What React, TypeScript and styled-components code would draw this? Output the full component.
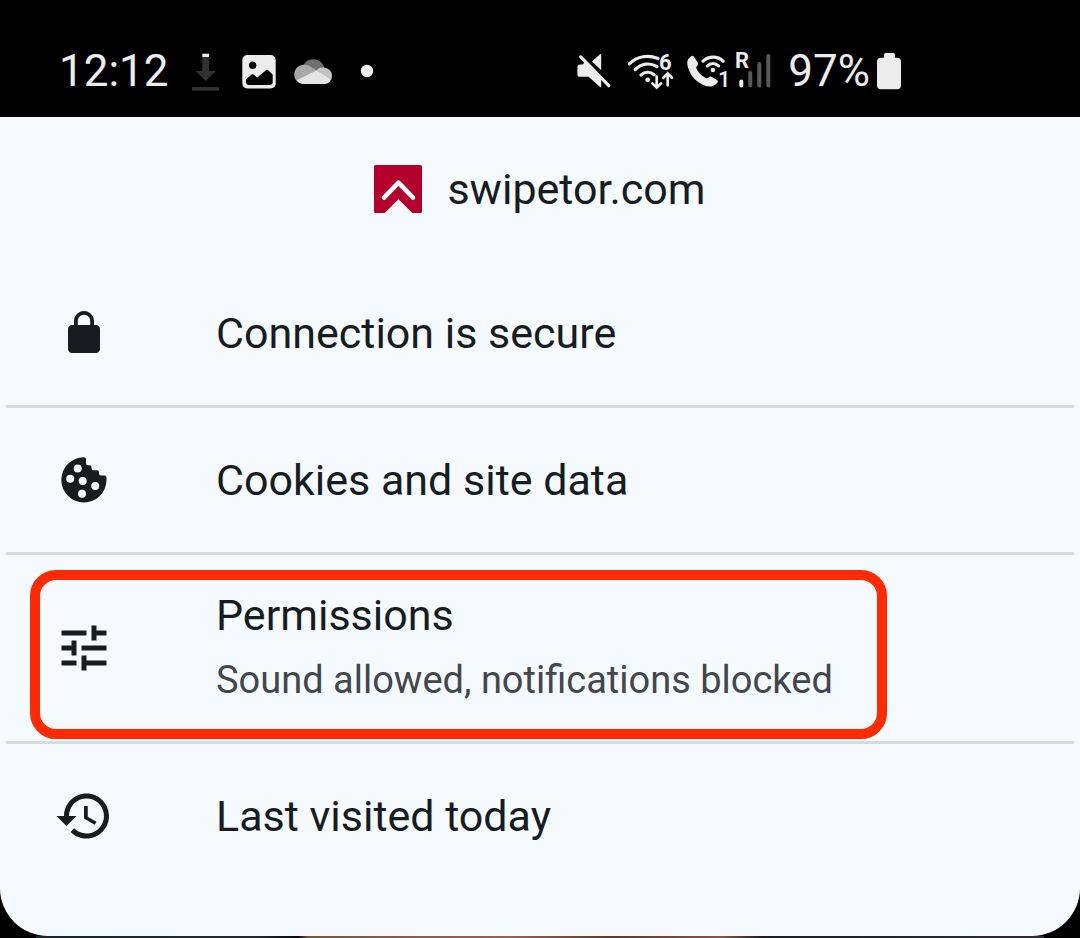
import React from "react";
import styled, { createGlobalStyle } from "styled-components";

const ink = "#171c1f";
const paper = "#f5faff";
const light = "#ececec";

const GlobalStyle = createGlobalStyle`
  *, *::before, *::after { box-sizing: border-box; }
  body {
    margin: 0;
    background: #000;
    font-family: Roboto, "Liberation Sans", sans-serif;
  }
`;

const StatusBar = styled.header`
  display: flex;
  align-items: center;
  justify-content: space-between;
  height: 117px;
  padding: 24px 177px 0 59px;
  background: #000;
  color: ${light};
`;

const StatusGroup = styled.div<{ $gap: number }>`
  display: flex;
  align-items: center;
  gap: ${(p) => p.$gap}px;
`;

const StatusText = styled.span`
  font-size: 44px;
  line-height: 48px;
  white-space: nowrap;
`;

const StatusIcon = styled.svg`
  display: block;
  flex: none;
  height: 40px;
  overflow: visible;
`;

const Sheet = styled.main`
  padding-bottom: 48px;
  border-radius: 0 0 48px 48px;
  background: ${paper};
  color: ${ink};
`;

const SiteHeader = styled.div`
  display: flex;
  align-items: center;
  justify-content: center;
  gap: 25px;
  height: 144px;
`;

const SiteLogo = styled.svg`
  display: block;
  width: 48px;
  height: 48px;
`;

const SiteName = styled.h1`
  margin: 0;
  font-size: 43px;
  font-weight: 400;
  line-height: 52px;
`;

const List = styled.ul`
  margin: 0;
  padding: 0 6px;
  list-style: none;
`;

const Item = styled.li`
  position: relative;
  & + & {
    border-top: 3px solid #d6dbe0;
  }
`;

const Row = styled.button`
  display: flex;
  align-items: center;
  gap: 102px;
  width: 100%;
  min-height: 144px;
  padding: 8px 48px;
  border: 0;
  background: transparent;
  color: inherit;
  font-family: inherit;
  text-align: left;
  cursor: pointer;
`;

const DetailRow = styled(Row)`
  min-height: 186px;
`;

const RowIcon = styled.svg`
  display: block;
  flex: none;
  width: 60px;
  height: 60px;
  fill: currentColor;
`;

const RowText = styled.span`
  display: flex;
  flex-direction: column;
`;

const RowTitle = styled.span`
  font-size: 43px;
  line-height: 64px;
`;

const RowDetail = styled.span`
  color: #42474b;
  font-size: 38px;
  line-height: 66px;
`;

const Highlight = styled.span`
  position: absolute;
  inset: 15px 187px 2px 24px;
  border: 10px solid #ff2a00;
  border-radius: 26px;
  pointer-events: none;
`;

const PagePeek = styled.div`
  height: 2px;
  margin: 0 36px;
  background: linear-gradient(
    90deg,
    #1c262c 0%,
    #222a2e 22%,
    #080808 26%,
    #7a5640 27%,
    #94664e 47%,
    #5e3a2a 57%,
    #85564a 68%,
    #1e1e22 72%,
    #2e2c30 100%
  );
`;

function DownloadIcon() {
  return (
    <StatusIcon width="32" viewBox="0 0 32 40" aria-hidden="true">
      <path d="M12.3 6H19v14h7L15.7 30 5.7 20h6.6z" fill="#303030" />
      <path d="M12.3 2.7H19V6h-6.7z" fill={light} />
      <path d="M2 36h27v3.7H2z" fill="#303030" />
    </StatusIcon>
  );
}

function PictureIcon() {
  return (
    <StatusIcon width="36" viewBox="0 0 36 40" aria-hidden="true">
      <rect x="2.3" y="4" width="33.4" height="33.4" rx="5" fill={light} />
      <circle cx="12.7" cy="14.3" r="3.7" />
      <path d="M6 28.6l5.4-5q1-.9 2 0l3.9 3 8.6-7.4q1.1-.9 2.2 0l4.6 4.3V31q0 3-3 3H9q-3 0-3-3z" />
    </StatusIcon>
  );
}

function CloudIcon() {
  return (
    <StatusIcon width="40" viewBox="0 0 40 40" aria-hidden="true">
      <circle cx="19.3" cy="19.4" r="11.2" fill="#707070" />
      <path d="M9.6 13.7c2.6-.2 5 .6 7 2l6 3.5L2.6 29.7C-2.6 23 1.6 14.2 9.6 13.7z" fill="#a8a8a8" />
      <path d="M22.6 19.2c2-2.6 5-3 7.4-2.6 7.5 1 9.7 8 7 12.4z" fill="#c2c2c2" />
      <path d="M22.6 19.2L37 28.5c-1 3-3.6 4.6-7 4.6H10c-3.4 0-6-1.4-7.5-3.8z" fill="#e4e4e4" />
    </StatusIcon>
  );
}

function DotIcon() {
  return (
    <StatusIcon width="30" viewBox="0 0 30 40" aria-hidden="true">
      <circle cx="15" cy="20" r="6.2" fill={light} />
    </StatusIcon>
  );
}

function MutedIcon() {
  return (
    <StatusIcon width="50" viewBox="0 0 50 40" aria-hidden="true" fill={light}>
      <path d="M20 10.4l8-7.2q1.2-.8 1.2.6v15.4z" />
      <path d="M13.4 10.8L29.2 27v8.4q0 1.4-1.2.5L16.6 25.8H8q-2.6 0-2.6-2.6v-6.8Q5.4 13.6 8 13.4h2.5z" />
      <path d="M8.7 5.9l28.1 28.8" stroke={light} strokeWidth="3.2" strokeLinecap="round" />
    </StatusIcon>
  );
}

function WifiIcon() {
  return (
    <StatusIcon width="54" viewBox="0 0 54 40" aria-hidden="true">
      <g fill="none" stroke={light} strokeWidth="3.2" strokeLinecap="round">
        <path d="M3.3 12.9C11.5 4.8 22.5 3.8 32 7.6" />
        <path d="M9.2 18.6C15.5 12.2 24 11.4 31 15.6" />
        <path d="M15 24c3.8-3.6 9.4-3.6 13.2-.3" />
        <g strokeWidth="2.7">
          <path d="M30.7 25.5v11M26.4 32.4l4.3 4.2 4.3-4.2" />
          <path d="M41.7 34.3V22.6M37.4 26.7l4.3-4.2 4.3 4.2" />
        </g>
      </g>
      <circle cx="21.7" cy="28.8" r="2.4" fill={light} />
      <text x="33" y="19" fill={light} fontSize="22" fontWeight="700">
        6
      </text>
    </StatusIcon>
  );
}

function CallIcon() {
  return (
    <StatusIcon width="46" viewBox="0 0 46 40" aria-hidden="true">
      <path
        fill={light}
        d="M3.2 10.5Q3.5 8.2 7 5.3 8.6 4 10 5.8l3.8 5.7q.8 1.5-.4 2.9-1.800 1.600-1 3.100Q15.500 24 21.800 27.100q1.600.8 3-.8 1.300-1.300 3.100-.3l5.200 3q1.600 1.200.3 2.800-2.900 3.400-5.900 3.800Q19 36 10.500 28 3 19.500 3.200 10.500z"
      />
      <g fill="none" stroke={light} strokeWidth="3.2" strokeLinecap="round">
        <path d="M19 10.1c5.8-5.4 14.6-5.4 20.2 0" />
        <path d="M23.4 14.9c3.3-3 7.8-3 11.2 0" />
      </g>
      <circle cx="28.9" cy="19" r="2.2" fill={light} />
      <text x="34" y="36" fill={light} fontSize="22" fontWeight="500">
        1
      </text>
    </StatusIcon>
  );
}

function SignalIcon() {
  return (
    <StatusIcon width="47" viewBox="0 0 47 40" aria-hidden="true">
      <g strokeWidth="4" strokeLinecap="round" stroke="#595959">
        <path d="M7.3 30.5v4" stroke={light} />
        <path d="M16.3 22v12.5M25.3 13v21.5M34.3 5v29.5" />
      </g>
      <text x="1" y="17" fill={light} fontSize="22" fontWeight="700">
        R
      </text>
    </StatusIcon>
  );
}

function BatteryIcon() {
  return (
    <StatusIcon width="26" viewBox="0 0 26 40" aria-hidden="true" fill={light}>
      <rect x="7" y="2" width="11" height="8" rx="1.5" />
      <rect x="0" y="6.7" width="24" height="31.6" rx="4" />
    </StatusIcon>
  );
}

export default function App() {
  return (
    <>
      <GlobalStyle />
      <StatusBar>
        <StatusGroup $gap={21}>
          <StatusText>12:12</StatusText>
          <StatusGroup $gap={18}>
            <DownloadIcon />
            <PictureIcon />
            <CloudIcon />
            <DotIcon />
          </StatusGroup>
        </StatusGroup>
        <StatusGroup $gap={7}>
          <StatusGroup $gap={4}>
            <MutedIcon />
            <WifiIcon />
            <CallIcon />
            <SignalIcon />
          </StatusGroup>
          <StatusText>97%</StatusText>
          <BatteryIcon />
        </StatusGroup>
      </StatusBar>

      <Sheet>
        <SiteHeader>
          <SiteLogo viewBox="0 0 48 48" aria-hidden="true">
            <path
              d="M1.5 0h45Q48 0 48 1.5v45q0 1.5-1.5 1.5h-8.2L24.5 34.2 10.7 48H1.5Q0 48 0 46.5v-45Q0 0 1.5 0z"
              fill="#b4002d"
            />
            <path
              d="M10 32.7l14.5-15 14.5 15"
              fill="none"
              stroke="#fff"
              strokeWidth="4.6"
              strokeLinecap="round"
              strokeLinejoin="round"
            />
          </SiteLogo>
          <SiteName>swipetor.com</SiteName>
        </SiteHeader>

        <List>
          <Item>
            <Row type="button">
              <RowIcon viewBox="-3 -3 30 30" aria-hidden="true">
                <path d="M18 8h-1V6c0-2.760-2.240-5-5-5S7 3.240 7 6v2H6c-1.100 0-2 .9-2 2v10c0 1.100.9 2 2 2h12c1.100 0 2-.9 2-2V10c0-1.100-.9-2-2-2zM8.900 8V6c0-1.710 1.390-3.100 3.100-3.100s3.100 1.390 3.100 3.100v2z" />
              </RowIcon>
              <RowText>
                <RowTitle>Connection is secure</RowTitle>
              </RowText>
            </Row>
          </Item>
          <Item>
            <Row type="button">
              <RowIcon viewBox="0 0 60 60" aria-hidden="true">
                <path
                  fillRule="evenodd"
                  d="M30 7.300q2 0 2 2v4q0 2 2 2h1.500q2 0 2 2v1q0 2 2 2h3.500q2 0 2 2v1.200q0 2 2 2h3.500q2 0 2 2V30A22.600 22.600 0 1 1 30 7.300zM23.700 14.500a4 4 0 1 0 0 8 4 4 0 0 0 0-8zM16.200 24.700a4 4 0 1 0 0 8 4 4 0 0 0 0-8zM28.700 27a4 4 0 1 0 0 8 4 4 0 0 0 0-8zM41.200 32a4 4 0 1 0 0 8 4 4 0 0 0 0-8zM28 39.700a4 4 0 1 0 0 8 4 4 0 0 0 0-8z"
                />
              </RowIcon>
              <RowText>
                <RowTitle>Cookies and site data</RowTitle>
              </RowText>
            </Row>
          </Item>
          <Item>
            <DetailRow type="button">
              <RowIcon viewBox="0 0 24 24" aria-hidden="true">
                <path d="M3 17v2h6v-2H3zM3 5v2h10V5H3zm10 16v-2h8v-2h-8v-2h-2v6h2zM7 9v2H3v2h4v2h2V9H7zm14 4v-2H11v2h10zm-6-4h2V7h4V5h-4V3h-2v6z" />
              </RowIcon>
              <RowText>
                <RowTitle>Permissions</RowTitle>
                <RowDetail>Sound allowed, notifications blocked</RowDetail>
              </RowText>
            </DetailRow>
            <Highlight />
          </Item>
          <Item>
            <Row type="button">
              <RowIcon viewBox="0 0 24 24" aria-hidden="true">
                <path d="M13 3c-4.970 0-9 4.030-9 9H1l3.890 3.890.07.14L9 12H6c0-3.870 3.130-7 7-7s7 3.130 7 7-3.130 7-7 7c-1.930 0-3.680-.79-4.940-2.060l-1.420 1.420C8.270 19.990 10.510 21 13 21c4.970 0 9-4.030 9-9s-4.030-9-9-9zm-1 5v5l4.280 2.540.72-1.210-3.500-2.080V8H12z" />
              </RowIcon>
              <RowText>
                <RowTitle>Last visited today</RowTitle>
              </RowText>
            </Row>
          </Item>
        </List>
      </Sheet>
      <PagePeek />
    </>
  );
}
